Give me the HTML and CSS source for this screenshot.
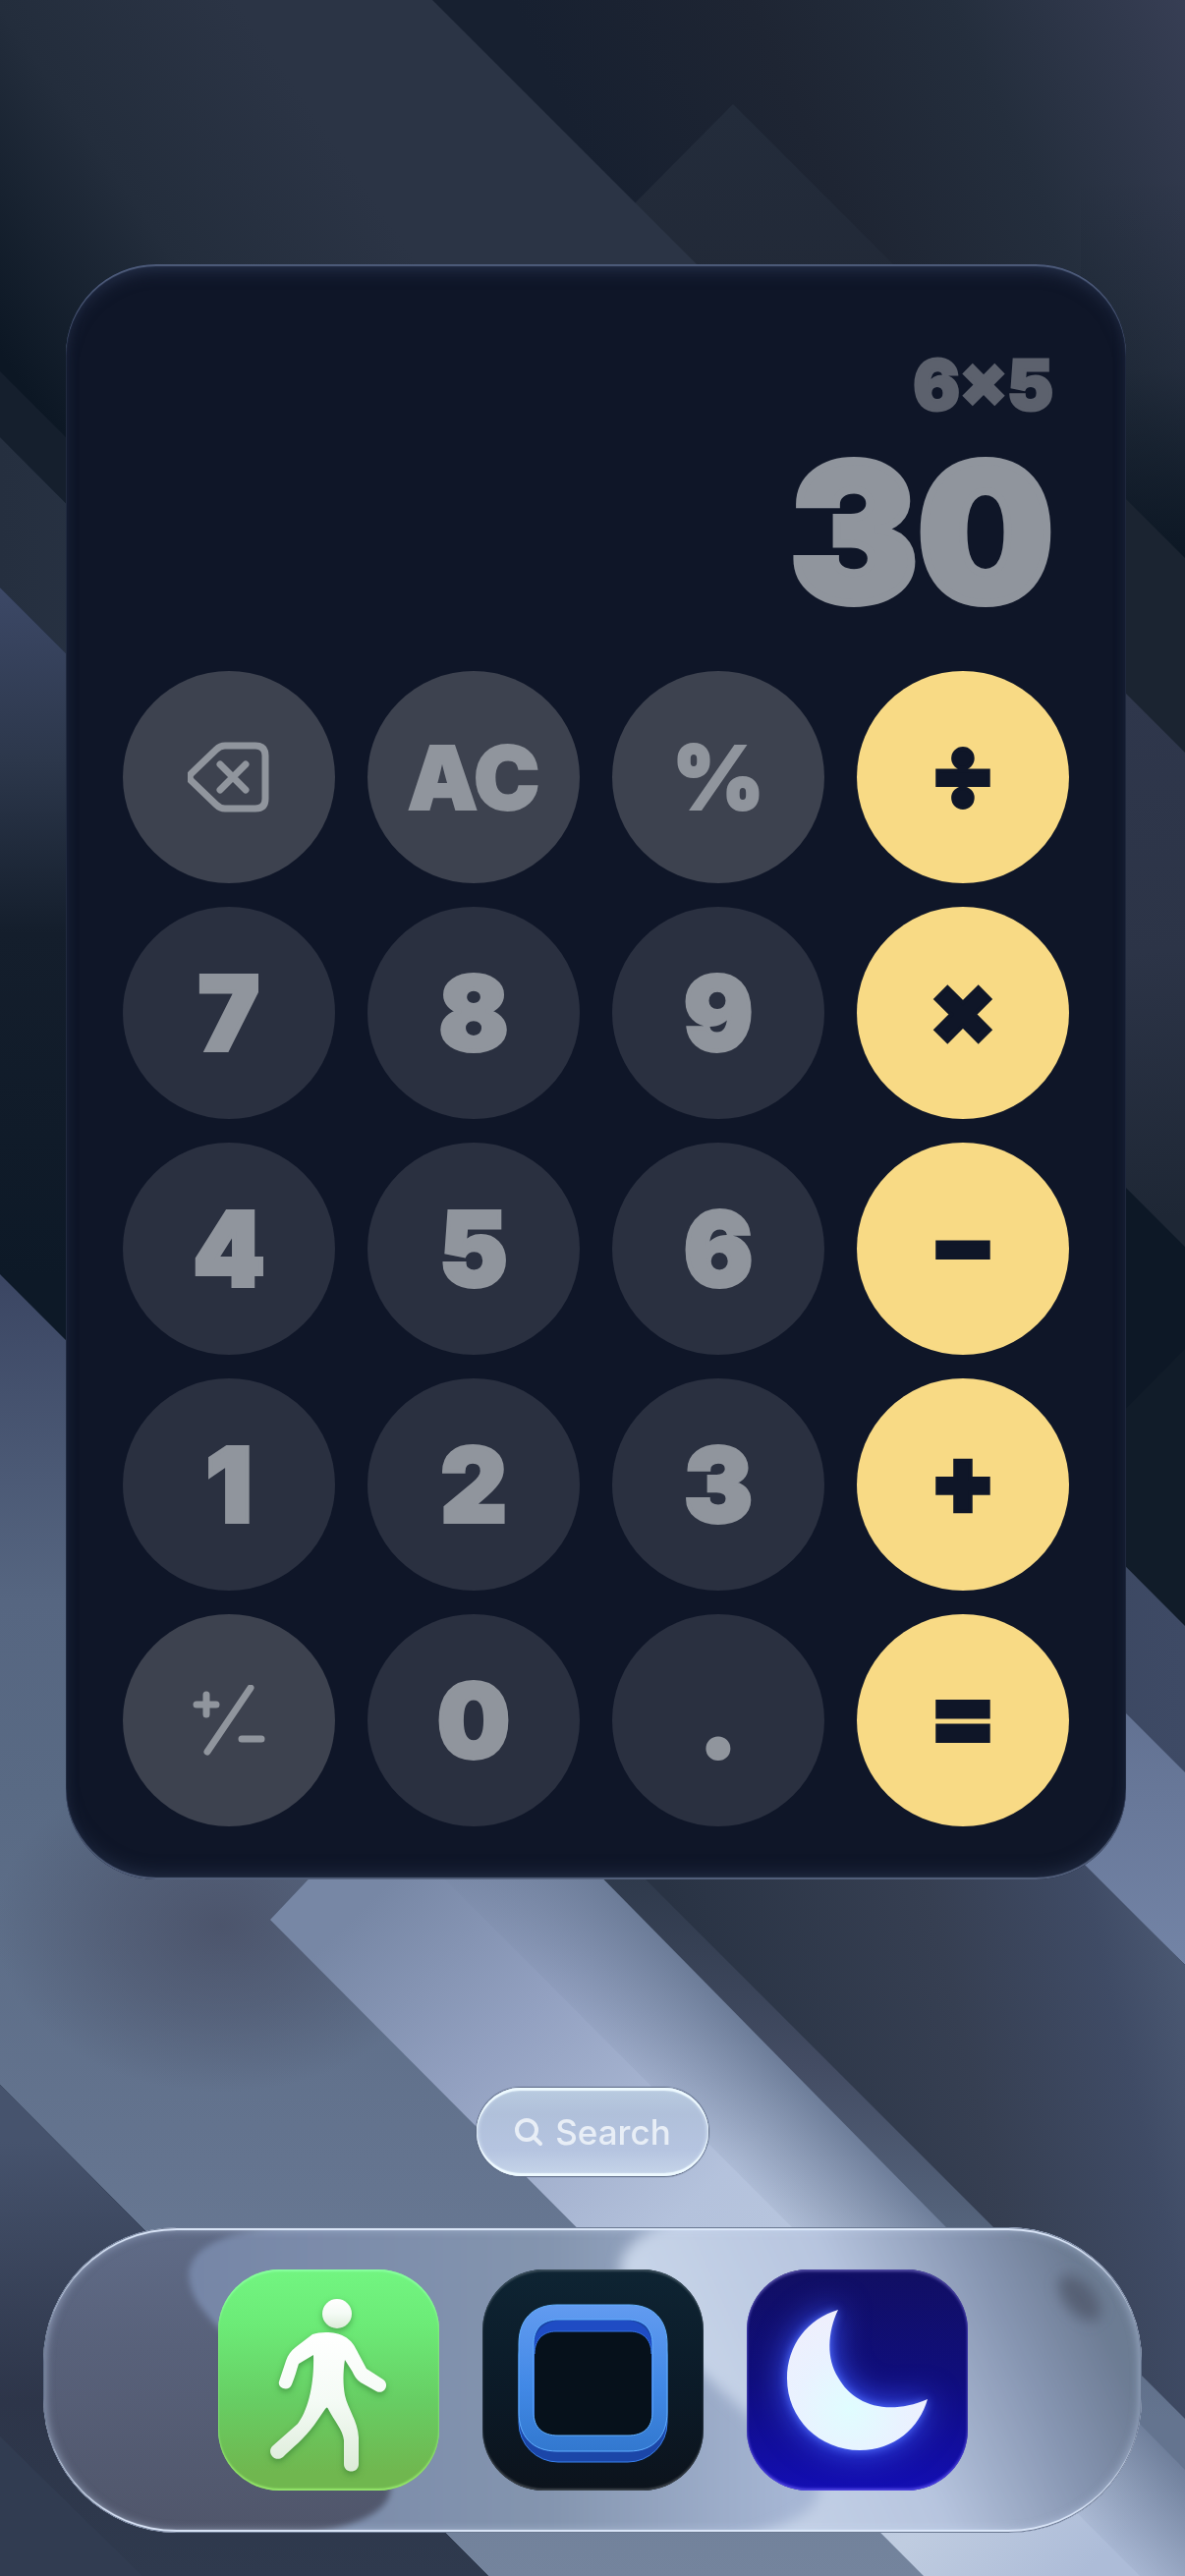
FILE: index.html
```html
<!DOCTYPE html>
<html lang="en">

<head>
  <meta charset="UTF-8">
  <meta name="viewport" content="width=device-width, initial-scale=1.0">
  <title>Calculator</title>
  <link rel="stylesheet" href="styles.css">
</head>

<body>
  <!-- Wallpaper -->
  <svg class="wallpaper" viewBox="0 0 1206 2622" preserveAspectRatio="xMidYMid slice" aria-hidden="true">
    <defs>
      <linearGradient id="topRight" gradientUnits="userSpaceOnUse" x1="640" y1="260" x2="1206" y2="0">
        <stop offset="0" stop-color="#172030"/>
        <stop offset="0.35" stop-color="#1e2533"/>
        <stop offset="0.65" stop-color="#242e3d"/>
        <stop offset="1" stop-color="#373e54"/>
      </linearGradient>
      <linearGradient id="topFade" x1="0" y1="0" x2="0" y2="1">
        <stop offset="0" stop-color="#0c1724" stop-opacity="0"/>
        <stop offset="0.5" stop-color="#0c1724" stop-opacity="0.2"/>
        <stop offset="1" stop-color="#0c1724"/>
      </linearGradient>
      <linearGradient id="topLeft" gradientUnits="userSpaceOnUse" x1="0" y1="360" x2="330" y2="130">
        <stop offset="0" stop-color="#0c1724"/>
        <stop offset="0.5" stop-color="#232d3c"/>
        <stop offset="1" stop-color="#2b3445"/>
      </linearGradient>
      <linearGradient id="peak" x1="0" y1="0" x2="0" y2="1">
        <stop offset="0" stop-color="#232c3b"/>
        <stop offset="1" stop-color="#212836"/>
      </linearGradient>
      <linearGradient id="bandA" gradientUnits="userSpaceOnUse" x1="1146" y1="700" x2="1180" y2="1240">
        <stop offset="0" stop-color="#2f374c"/>
        <stop offset="0.5" stop-color="#2c3447"/>
        <stop offset="1" stop-color="#1e2735"/>
      </linearGradient>
      <linearGradient id="bandC" x1="0" y1="0" x2="1" y2="0">
        <stop offset="0" stop-color="#252f3f"/>
        <stop offset="1" stop-color="#3e4a65"/>
      </linearGradient>
      <linearGradient id="bandD" gradientUnits="userSpaceOnUse" x1="0" y1="600" x2="0" y2="1300">
        <stop offset="0" stop-color="#3c4866"/>
        <stop offset="0.25" stop-color="#2c374b"/>
        <stop offset="0.5" stop-color="#141e2c"/>
        <stop offset="1" stop-color="#0d1927"/>
      </linearGradient>
      <linearGradient id="rightLight" x1="0" y1="0" x2="0" y2="1">
        <stop offset="0" stop-color="#52607f"/>
        <stop offset="1" stop-color="#7384a6"/>
      </linearGradient>
      <linearGradient id="lowerRight" gradientUnits="userSpaceOnUse" x1="700" y1="2020" x2="1206" y2="1900">
        <stop offset="0" stop-color="#293344"/>
        <stop offset="0.5" stop-color="#363f52"/>
        <stop offset="0.8" stop-color="#3f4b65"/>
        <stop offset="1" stop-color="#4e5c76"/>
      </linearGradient>
      <linearGradient id="strip" gradientUnits="userSpaceOnUse" x1="0" y1="1912" x2="0" y2="2460">
        <stop offset="0" stop-color="#2f3a4c"/>
        <stop offset="0.35" stop-color="#434c63"/>
        <stop offset="0.65" stop-color="#55647c"/>
        <stop offset="1" stop-color="#64748f"/>
      </linearGradient>
      <linearGradient id="leftLight" gradientUnits="userSpaceOnUse" x1="0" y1="1300" x2="0" y2="2622">
        <stop offset="0" stop-color="#3b4663"/>
        <stop offset="0.25" stop-color="#566681"/>
        <stop offset="0.4" stop-color="#596a84"/>
        <stop offset="0.68" stop-color="#64748f"/>
        <stop offset="1" stop-color="#74849d"/>
      </linearGradient>
      <linearGradient id="beam" gradientUnits="userSpaceOnUse" x1="400" y1="1912" x2="1100" y2="2622">
        <stop offset="0" stop-color="#7787a5"/>
        <stop offset="0.2" stop-color="#93a1c1"/>
        <stop offset="0.45" stop-color="#b4c2dc"/>
        <stop offset="0.85" stop-color="#bfcce0"/>
        <stop offset="1" stop-color="#adbcd8"/>
      </linearGradient>
      <linearGradient id="beamEdge" gradientUnits="userSpaceOnUse" x1="710" y1="2190" x2="802" y2="2098">
        <stop offset="0" stop-color="#6b7b97" stop-opacity="0"/>
        <stop offset="1" stop-color="#6b7b97"/>
      </linearGradient>
      <linearGradient id="bottomLeft" gradientUnits="userSpaceOnUse" x1="60" y1="2180" x2="60" y2="2622">
        <stop offset="0" stop-color="#46536d"/>
        <stop offset="0.6" stop-color="#2d3549"/>
        <stop offset="1" stop-color="#2f3a4e"/>
      </linearGradient>
      <radialGradient id="smudge">
        <stop offset="0" stop-color="#4a5269" stop-opacity="0.9"/>
        <stop offset="0.5" stop-color="#4a5269" stop-opacity="0.5"/>
        <stop offset="1" stop-color="#4a5269" stop-opacity="0"/>
      </radialGradient>
    </defs>
    <rect width="1206" height="2622" fill="#0d1826"/>
    <path d="M430 0H1206V568L1100 470H900Z" fill="url(#topRight)"/>
    <rect x="1100" y="180" width="106" height="390" fill="url(#topFade)"/>
    <path d="M640 213 746 106 1010 370H800Z" fill="url(#peak)"/>
    <path d="M0 0H440L450 10 800 360V445H67L0 378Z" fill="url(#topLeft)"/>
    <path d="M1100 462 1206 568V768L1100 662Z" fill="#1b2431"/>
    <path d="M1100 660 1206 766V1269L1100 1163Z" fill="url(#bandA)"/>
    <path d="M1100 1480 1206 1373V1700H1100Z" fill="#111c29"/>
    <path d="M0 378 200 578V645L0 445Z" fill="#151f2d"/>
    <path d="M0 445 1206 1655V1806L0 598Z" fill="url(#bandC)"/>
    <path d="M0 598 700 1298V1998L0 1298Z" fill="url(#bandD)"/>
    <path d="M900 1498 1206 1804V2000L900 1700Z" fill="url(#rightLight)"/>
    <path d="M500 1800H1006L1206 2000V2464Z" fill="url(#lowerRight)"/>
    <path d="M0 1297 614 1912 1206 2504V2622H497L0 2122Z" fill="url(#leftLight)"/>
    <ellipse cx="225" cy="1960" rx="230" ry="170" fill="url(#smudge)"/>
    <path d="M275 1954 345 1880H582L1206 2504V2622H940Z" fill="url(#beam)"/>
    <path d="M420 1880H582L1206 2504V2622H1160Z" fill="url(#beamEdge)"/>
    <path d="M582 1880 640 1896 1206 2462V2514Z" fill="url(#strip)"/>
    <path d="M0 2122 497 2622H0Z" fill="url(#bottomLeft)"/>
    <path d="M0 2480 145 2622H0Z" fill="#313c51"/>
  </svg>

  <main class="screen">
    <section class="calculator" aria-label="Calculator">
      <div class="display">
        <div class="expression">6×5</div>
        <output class="result">30</output>
      </div>
      <div class="keys">
        <button class="key key-fn" aria-label="Delete">
          <svg class="key-icon" viewBox="0 0 84 72">
            <path d="M38 4H69Q79 4 79 14V58Q79 68 69 68H38Q33 68 29 64L4 40Q0 36 4 32L29 8Q33 4 38 4Z"/>
            <path d="M33 23 59 49M59 23 33 49"/>
          </svg>
        </button>
        <button class="key key-fn">AC</button>
        <button class="key key-fn">%</button>
        <button class="key key-op">÷</button>
        <button class="key">7</button>
        <button class="key">8</button>
        <button class="key">9</button>
        <button class="key key-op">×</button>
        <button class="key">4</button>
        <button class="key">5</button>
        <button class="key">6</button>
        <button class="key key-op">−</button>
        <button class="key">1</button>
        <button class="key">2</button>
        <button class="key">3</button>
        <button class="key key-op">+</button>
        <button class="key key-fn" aria-label="Plus or minus">
          <svg class="key-icon" viewBox="0 0 84 72">
            <path d="M64 3 20 68M9 20H29M19 10V30M55 55H75"/>
          </svg>
        </button>
        <button class="key">0</button>
        <button class="key">.</button>
        <button class="key key-op">=</button>
      </div>
    </section>

    <button class="search">
      <svg class="search-icon" viewBox="0 0 30 30"><circle cx="13" cy="13" r="10"/><path d="M20 20 27 27"/></svg>
      Search
    </button>

    <nav class="dock">
      <svg class="dock-glass" viewBox="0 0 1117 311" preserveAspectRatio="none" aria-hidden="true">
        <defs>
          <linearGradient id="glassDark" x1="0" y1="0" x2="0.1" y2="1">
            <stop offset="0" stop-color="#606c88"/>
            <stop offset="0.4" stop-color="#58617a"/>
            <stop offset="1" stop-color="#50566b"/>
          </linearGradient>
          <linearGradient id="glassMid" gradientUnits="userSpaceOnUse" x1="150" y1="0" x2="760" y2="0">
            <stop offset="0" stop-color="#7686a7"/>
            <stop offset="0.6" stop-color="#8495af"/>
            <stop offset="1" stop-color="#a6b6d4"/>
          </linearGradient>
          <linearGradient id="glassLight" gradientUnits="userSpaceOnUse" x1="640" y1="250" x2="1060" y2="60">
            <stop offset="0" stop-color="#ccd9eb"/>
            <stop offset="0.5" stop-color="#b7c5df"/>
            <stop offset="0.8" stop-color="#8796b2"/>
            <stop offset="1" stop-color="#6c7b93"/>
          </linearGradient>
          <filter id="soft" x="-20%" y="-20%" width="140%" height="140%"><feGaussianBlur stdDeviation="3"/></filter>
          <filter id="softer" x="-50%" y="-50%" width="200%" height="200%"><feGaussianBlur stdDeviation="7"/></filter>
        </defs>
        <rect width="1117" height="311" fill="url(#glassDark)"/>
        <path filter="url(#soft)" d="M260 -2C170 4 130 28 156 75C180 115 300 215 340 242C370 270 350 300 265 313H1117V-2Z" fill="url(#glassMid)"/>
        <path filter="url(#softer)" d="M650 -10C600 6 575 30 592 62C615 105 750 220 780 245C805 275 780 300 700 320H1140V-10Z" fill="url(#glassLight)"/>
        <ellipse filter="url(#softer)" cx="1054" cy="72" rx="28" ry="15" transform="rotate(50 1054 72)" fill="#566074"/>
      </svg>

      <a class="app app-steps" href="#" aria-label="Steps">
        <svg viewBox="0 0 225 225">
          <defs>
            <linearGradient id="walker" x1="0" y1="0" x2="0" y2="1">
              <stop offset="0" stop-color="#fff"/>
              <stop offset="0.5" stop-color="#f4fbf5"/>
              <stop offset="1" stop-color="#dcebd8"/>
            </linearGradient>
          </defs>
          <g class="walker" fill="url(#walker)">
            <circle cx="121" cy="45" r="15"/>
            <path d="M96 66C104 63 120 63 128 68C136 72 139 78 143 86L151 101L168 112C175 117 169 128 161 124L145 115C141 112 139 109 136 103L129 92C127 104 127 118 129 128C132 142 142 154 143 171V198C143 208 128 208 128 198V174C127 163 118 154 112 142Q111 139 109 142L98 158C88 172 75 182 66 191C58 197 49 187 55 180L81 157C91 144 98 118 97 87L82 96C80 102 78 110 75 117C72 125 60 121 62 114L69 93C71 87 74 83 79 79Z"/>
          </g>
        </svg>
      </a>
      <a class="app app-frame" href="#" aria-label="Frame">
        <svg viewBox="0 0 225 225">
          <defs>
            <linearGradient id="frameFront" x1="0" y1="0" x2="0" y2="1">
              <stop offset="0" stop-color="#629bf0"/>
              <stop offset="0.55" stop-color="#4289e6"/>
              <stop offset="1" stop-color="#3278cf"/>
            </linearGradient>
          </defs>
          <rect x="37" y="47" width="151" height="149" rx="40" fill="#1b46a8" stroke="#3b82f0" stroke-width="1"/>
          <rect x="52" y="52" width="121" height="118" rx="26" fill="#1f4cc4"/>
          <path d="M53 86C53 70 63 63 75 63H150C162 63 172 70 172 86V150C172 162 162 170 150 170H75C63 170 53 162 53 150Z" fill="#06111b"/>
          <path d="M53 86C53 70 63 63 75 63H150C162 63 172 70 172 86" fill="none" stroke="#3474e6" stroke-width="1"/>
          <path fill-rule="evenodd" fill="url(#frameFront)" stroke="#62b0ff" stroke-width="1" d="M76 36H149C174 36 188 51 188 76V145C188 170 174 185 149 185H76C51 185 37 170 37 145V76C37 51 51 36 76 36ZM77 51C61 51 52 60 52 76V145C52 161 61 169 77 169H148C164 169 173 161 173 145V76C173 60 164 51 148 51Z"/>
        </svg>
      </a>
      <a class="app app-moon" href="#" aria-label="Sleep">
        <svg viewBox="0 0 225 225">
          <defs>
            <radialGradient id="moon" cx="0.45" cy="0.7" r="0.75">
              <stop offset="0" stop-color="#e0fdff"/>
              <stop offset="0.5" stop-color="#e9f2ff"/>
              <stop offset="1" stop-color="#f0eefc"/>
            </radialGradient>
          </defs>
          <path class="moon" fill="url(#moon)" d="M93 41C82 64 81 91 93 110C108 137 142 150 184 132C176 161 150 184 115 184C74 184 41 152 41 111C41 77 62 50 93 41Z"/>
        </svg>
      </a>
    </nav>
  </main>
</body>

</html>
```
FILE: styles.css
```css
body {
  margin: 0;
  font-family: Inter, "Liberation Sans", sans-serif;
  background-color: #0d1826;
  color: #90959d;
}

button {
  box-sizing: border-box;
  border: none;
  padding: 0;
  font-family: inherit;
  cursor: pointer;
}

.wallpaper {
  position: fixed;
  top: 0;
  left: 0;
  width: 100%;
  height: 100%;
  z-index: -1;
}

.screen {
  display: flex;
  flex-direction: column;
  align-items: center;
  padding: 269px 44px 45px;
}

.calculator {
  box-sizing: border-box;
  align-self: stretch;
  margin: 0 16px 0 23px;
  padding: 80px 58px 54px;
  border-radius: 92px;
  background: #0f1628;
  box-shadow: inset 0 2px 1px #4f5d7c, inset 0 12px 18px -8px #2a3651, inset 0 -2px 1px #56637f, inset 0 -12px 18px -8px #253048;
}

.display {
  display: flex;
  flex-direction: column;
  align-items: flex-end;
  padding: 0 16px 34px 0;
  font-weight: 900;
}

.expression {
  font-size: 70px;
  line-height: 86px;
  color: #5c616d;
  -webkit-text-stroke: 3px #5c616d;
}

.result {
  font-size: 194px;
  line-height: 214px;
  -webkit-text-stroke: 8px #90959d;
}

.keys {
  display: grid;
  grid-template-columns: repeat(4, 216px);
  justify-content: space-between;
  row-gap: 24px;
}

.key {
  display: flex;
  align-items: center;
  justify-content: center;
  height: 216px;
  border-radius: 50%;
  background: #2a3040;
  color: #90959d;
  font-size: 104px;
  font-weight: 900;
  -webkit-text-stroke: 4px currentColor;
}

.key-fn {
  background: #3d424f;
  font-size: 90px;
  -webkit-text-stroke-width: 2px;
}

.key-op {
  padding-bottom: 12px;
  background: #f8da85;
  color: #0f1628;
  font-size: 98px;
}

.key-icon {
  width: 84px;
  height: 72px;
  fill: none;
  stroke: currentColor;
  stroke-width: 7px;
  stroke-linecap: round;
  stroke-linejoin: round;
}

.search {
  display: flex;
  align-items: center;
  justify-content: center;
  gap: 12px;
  width: 236px;
  height: 90px;
  margin-top: 212px;
  border-radius: 45px;
  background: linear-gradient(#b9cbe0, #b0c0da 30%, #b5c4e0 70%, #c6d5e9);
  box-shadow: 0 0 1px 1px #5d6a84, inset 0 3px 1px #eefaff, inset 0 -3px 1px #eefaff, inset 0 0 4px 1px #dbe8f8;
  color: #e8eef6;
  font-size: 35px;
  font-weight: 500;
}

.search-icon {
  width: 30px;
  height: 30px;
  fill: none;
  stroke: currentColor;
  stroke-width: 4px;
  stroke-linecap: round;
}

.dock {
  position: relative;
  box-sizing: border-box;
  align-self: stretch;
  display: flex;
  justify-content: center;
  gap: 44px;
  margin-top: 52px;
  padding: 43px 0;
  border-radius: 136px;
  overflow: hidden;
}

.dock-glass {
  position: absolute;
  inset: 0;
  width: 100%;
  height: 100%;
}

/* bright rim of the glass, kept over its colours */
.dock::after {
  content: "";
  position: absolute;
  inset: 0;
  border-radius: 136px;
  box-shadow: inset 0 0 1px 1px #5f6d88, inset 0 3px 1px #e3eeff, inset 0 -3px 1px #e3eeff, inset 0 0 10px 2px rgba(205, 222, 250, 0.5);
  pointer-events: none;
}

.app {
  position: relative;
  width: 225px;
  height: 225px;
  border-radius: 62px;
  overflow: hidden;
}

.app svg {
  display: block;
}

.app-steps {
  background: linear-gradient(#72f581, #6ceb77 25%, #67cd63 60%, #70b74f 92%);
  box-shadow: inset 0 -2px 2px #97ea6c, inset 0 2px 2px #8affa0;
}

.app-frame {
  background: linear-gradient(#0e2433, #0b1a27 55%, #0c131c);
  box-shadow: inset 0 2px 2px #3b4e5b, inset 0 -2px 2px #3d434a;
}

.app-moon {
  background: linear-gradient(#110f63, #100e7c 50%, #130eb4);
  box-shadow: inset 0 2px 3px #554fa8, inset 0 -2px 3px #554ae8;
}

.walker {
  filter: drop-shadow(0 3px 3px rgba(40, 110, 40, 0.5));
}

.moon {
  filter: drop-shadow(0 0 5px #5570ff) drop-shadow(0 0 16px #3a55f5);
}
```
